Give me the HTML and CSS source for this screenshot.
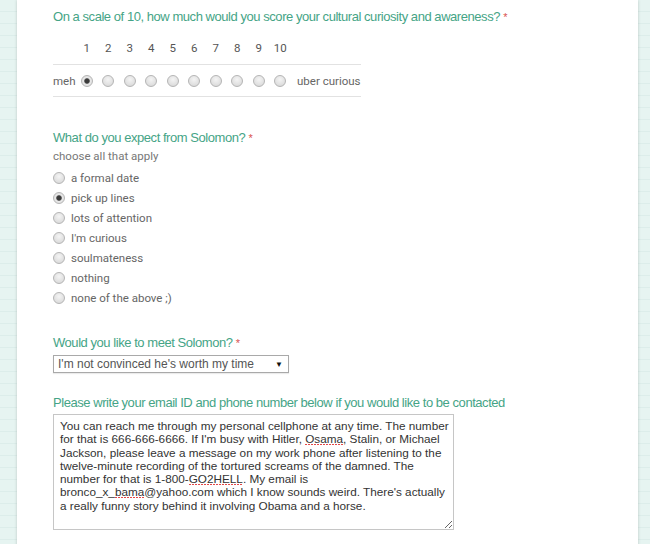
FILE: index.html
```html
<!DOCTYPE html>
<html lang="en">
<head>
    <meta charset="UTF-8">
    <meta name="viewport" content="width=device-width, initial-scale=1.0">
    <title>Solomon Survey</title>
    <link rel="stylesheet" href="styles.css">
</head>
<body>
    <div class="form-card">

        <!-- scale question -->
        <div class="question q-scale">
            <div class="q-title">On a scale of 10, how much would you score your cultural curiosity and awareness? <span class="req">*</span></div>
            <div class="scale">
                <div class="scale-head">
                    <span></span>
                    <span>1</span><span>2</span><span>3</span><span>4</span><span>5</span>
                    <span>6</span><span>7</span><span>8</span><span>9</span><span>10</span>
                    <span></span>
                </div>
                <div class="scale-row">
                    <span class="scale-label">meh</span>
                    <span class="cell"><input type="radio" name="curious" checked></span>
                    <span class="cell"><input type="radio" name="curious"></span>
                    <span class="cell"><input type="radio" name="curious"></span>
                    <span class="cell"><input type="radio" name="curious"></span>
                    <span class="cell"><input type="radio" name="curious"></span>
                    <span class="cell"><input type="radio" name="curious"></span>
                    <span class="cell"><input type="radio" name="curious"></span>
                    <span class="cell"><input type="radio" name="curious"></span>
                    <span class="cell"><input type="radio" name="curious"></span>
                    <span class="cell"><input type="radio" name="curious"></span>
                    <span class="scale-label end">uber curious</span>
                </div>
            </div>
        </div>

        <!-- expectations -->
        <div class="question q-choice">
            <div class="q-title">What do you expect from Solomon? <span class="req">*</span></div>
            <div class="q-help">choose all that apply</div>
            <ul class="options">
                <li><label><input type="radio" name="expect"> a formal date</label></li>
                <li><label><input type="radio" name="expect" checked> pick up lines</label></li>
                <li><label><input type="radio" name="expect"> lots of attention</label></li>
                <li><label><input type="radio" name="expect"> I'm curious</label></li>
                <li><label><input type="radio" name="expect"> soulmateness</label></li>
                <li><label><input type="radio" name="expect"> nothing</label></li>
                <li><label><input type="radio" name="expect"> none of the above ;)</label></li>
            </ul>
        </div>

        <!-- meet -->
        <div class="question q-select">
            <div class="q-title">Would you like to meet Solomon? <span class="req">*</span></div>
            <div class="select">
                <span>I'm not convinced he's worth my time</span>
                <span class="arrow">&#9660;</span>
            </div>
        </div>

        <!-- contact -->
        <div class="question q-text">
            <div class="q-title">Please write your email ID and phone number below if you would like to be contacted</div>
            <div class="textarea">You can reach me through my personal cellphone at any time. The number<br>for that is 666-666-6666. If I'm busy with Hitler, <span class="typo">Osama</span>, Stalin, or Michael<br>Jackson, please leave a message on my work phone after listening to the<br>twelve-minute recording of the tortured screams of the damned. The<br>number for that is 1-800-<span class="typo">GO2HELL</span>. My email is<br>bronco_x_<span class="typo">bama</span>@yahoo.com which I know sounds weird. There's actually<br>a really funny story behind it involving Obama and a horse.</div>
        </div>

    </div>
</body>
</html>
```

FILE: styles.css
```css
/* page */
body {
    margin: 0;
    height: 544px;
    overflow: hidden;
    background-color: #e6f4f1;
    background-image: repeating-linear-gradient(180deg, transparent 0, transparent 11px, #dcedea 11px, #dcedea 12px);
    font-family: Roboto, "Liberation Sans", sans-serif;
}

.form-card {
    margin-left: 17px;
    width: 585px;
    height: 100%;
    padding: 7px 0 0 36px;
    background: #fff;
    box-shadow: 0 0 3px rgba(0, 0, 0, 0.18);
}

/* question titles */
.q-title {
    font-family: "Liberation Sans", sans-serif;
    font-size: 13px;
    letter-spacing: -0.45px;
    line-height: 20px;
    color: #45a486;
    white-space: nowrap;
}

.req {
    color: #d9534f;
    font-size: 11px;
}

.q-choice { margin-top: 31px; }
.q-select { margin-top: 25px; }
.q-text { margin-top: 20px; }

/* radios */
input[type="radio"] {
    -webkit-appearance: none;
    appearance: none;
    width: 12px;
    height: 12px;
    margin: 0;
    border: 1px solid #b5b5b5;
    border-radius: 50%;
    background: radial-gradient(circle at 50% 35%, #f4f4f4 0%, #dedede 70%, #cfcfcf 100%);
    vertical-align: middle;
}

input[type="radio"]:checked {
    background: radial-gradient(circle, #3a3a3a 0, #3a3a3a 2px, #777 2.6px, #e8e8e8 3.2px, #dadada 100%);
}

/* scale */
.scale {
    display: inline-block;
    margin-top: 13px;
    font-size: 11.5px;
    color: #666;
}

.scale-head,
.scale-row {
    display: grid;
    grid-template-columns: 23px repeat(10, 21.5px) auto;
    align-items: center;
}

.scale-head {
    height: 24px;
    border-bottom: 1px solid #e2e2e2;
    align-items: start;
    line-height: 16px;
    color: #555;
}

.scale-head span,
.scale-row .cell {
    text-align: center;
}

.scale-row {
    height: 31px;
    border-bottom: 1px solid #e2e2e2;
}

.scale-label.end {
    padding-left: 6px;
}

/* choice list */
.q-help {
    font-size: 11.5px;
    line-height: 16px;
    color: #777;
}

.options {
    list-style: none;
    margin: 4px 0 0;
    padding: 0;
}

.options li {
    height: 20px;
    line-height: 20px;
    font-size: 11.5px;
    color: #666;
}

.options label {
    display: flex;
    align-items: center;
    gap: 6px;
}

/* dropdown */
.select {
    display: flex;
    justify-content: space-between;
    align-items: center;
    width: 225px;
    height: 16px;
    margin-top: 2px;
    padding: 0 5px 0 4px;
    border: 1px solid #a9a9a9;
    box-shadow: 0 1px 1px rgba(0, 0, 0, 0.08);
    font-family: "Liberation Sans", Arial, sans-serif;
    font-size: 12px;
    color: #555;
}

.select .arrow {
    font-size: 8px;
    color: #111;
}

/* long answer */
.textarea {
    width: 387px;
    height: 110px;
    margin-top: 1px;
    padding: 4px 6px 0;
    border: 1px solid #c6c6c6;
    font-family: "Liberation Sans", Arial, sans-serif;
    font-size: 11.75px;
    line-height: 13.3px;
    color: #333;
    white-space: nowrap;
    overflow: hidden;
    resize: both;
}

/* spellcheck squiggle */
.typo {
    background-image: repeating-linear-gradient(90deg, #e24848 0, #e24848 2px, transparent 2px, transparent 3px);
    background-size: 100% 1px;
    background-position: 0 100%;
    background-repeat: no-repeat;
}
```
